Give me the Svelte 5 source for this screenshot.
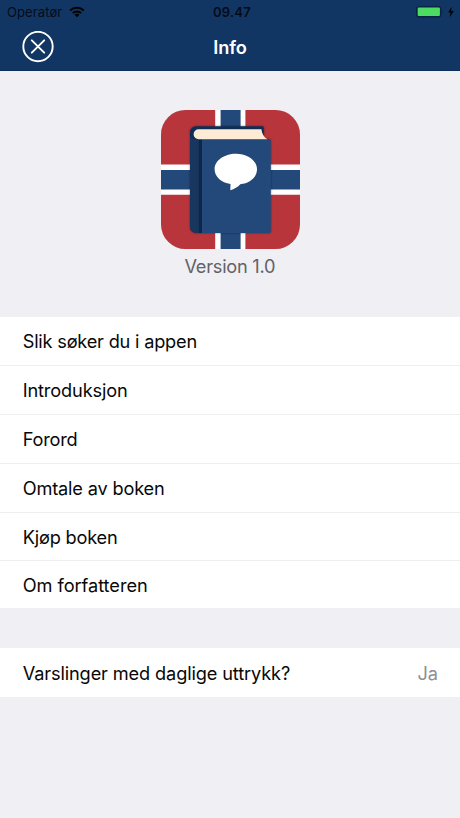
<script lang="ts">
    const items = [
        { label: 'Slik søker du i appen', width: 174.5 },
        { label: 'Introduksjon', width: 105 },
        { label: 'Forord', width: 55 },
        { label: 'Omtale av boken', width: 142 },
        { label: 'Kjøp boken', width: 95 },
        { label: 'Om forfatteren', width: 125 },
    ];
</script>

<div class="screen">
    <header>
        <div class="status">
            <div class="carrier">
                <span>Operatør</span>
                <svg width="16" height="12" viewBox="0 0 16 12">
                    <path d="M1.2 4.5a9.7 9.7 0 0 1 13.6 0M3.8 7.1a6 6 0 0 1 8.4 0" />
                    <path class="solid" d="M8 11.2 5.6 8.8a3.4 3.4 0 0 1 4.8 0z" />
                </svg>
            </div>
            <time>09.47</time>
            <svg class="power" width="39" height="13" viewBox="0 0 39 13">
                <rect class="case" x=".6" y=".5" width="24.4" height="10.6" rx="2.2" />
                <rect class="charge" x="1.7" y="1.6" width="22.2" height="8.4" rx="1" />
                <path class="tip" d="M26.2 4q1.4 1.8 0 3.6z" />
                <path class="solid" d="M35.6 .8 32.2 6.5h2.4l-.8 4.7L37.8 5.1h-2.6z" />
            </svg>
        </div>
        <nav>
            <button aria-label="Lukk">
                <svg width="32" height="32" viewBox="0 0 32 32">
                    <circle cx="16" cy="15.5" r="14.7" />
                    <path d="m9.8 9.3 12.4 12.4M22.2 9.3 9.8 21.7" />
                </svg>
            </button>
            <h1>Info</h1>
        </nav>
    </header>

    <section class="about">
        <svg width="139" height="139" viewBox="0 0 139 139">
            <defs>
                <clipPath id="tile"><rect width="139" height="139" rx="24.5" /></clipPath>
                <filter id="shade" x="-10%" y="-10%" width="120%" height="120%">
                    <feDropShadow dx="0" dy="0" stdDeviation="1.1" flood-opacity=".45" />
                </filter>
            </defs>
            <g clip-path="url(#tile)">
                <rect width="139" height="139" fill="#b8353c" />
                <path fill="#fff" d="M54.2 0h30.2v139H54.2zM0 54.6h139v30.2H0z" />
                <path fill="#23487a" d="M59.6 0h20v139h-20zM0 59.9h139v19.6H0z" />
                <g filter="url(#shade)">
                    <path fill="#112d54" d="M35 16.3h66.4q1.4 0 1.4 1.6v11.4h5.4v93.8H35a6 6 0 0 1-6-6V22.3a6 6 0 0 1 6-6z" />
                    <path fill="#23487a" d="M40.8 29.3h67.4a1.6 1.6 0 0 1 1.6 1.6v90.6a1.6 1.6 0 0 1-1.6 1.6H40.8z" />
                </g>
                <path fill="#19365f" d="M29 25.5q1 3.8 6 3.8h3.6v93.8H35a6 6 0 0 1-6-6z" />
                <path fill="#0e2749" d="M37.8 29.3h3.2v93.8h-3.2z" />
                <path fill="#fdebd6" d="M37.6 19.3h62.8c.4 4.2 2.5 8 6 10H37.6a5 5 0 0 1 0-10z" />
                <path fill="#fff" d="M74.8 43.8c11.8 0 21.2 7 21.2 15.4 0 8-7 14-16.7 15.1-2.3 2.7-6 4.7-10 6l.2-6.3c-9.2-1.5-15.9-7.3-15.9-14.8 0-8.4 9.4-15.4 21.2-15.4z" />
            </g>
        </svg>
        <svg class="version" width="92" height="24"><text x=".5" y="18" textLength="91">Version 1.0</text></svg>
    </section>

    <ul>
        {#each items as item}
            <li>
                <svg width="300" height="26"><text x="-.3" y="20" textLength={item.width}>{item.label}</text></svg>
            </li>
        {/each}
    </ul>

    <div class="setting">
        <svg width="300" height="26"><text x="-.3" y="20" textLength="267.5">Varslinger med daglige uttrykk?</text></svg>
        <span>Ja</span>
    </div>
</div>

<style>
    :global(body) {
        background: #efeff4;
    }

    .screen {
        width: 460px;
        height: 818px;
        overflow: hidden;
        background: #efeff4;
        font-family: Inter, "Liberation Sans", sans-serif;
        color: #080808;
    }

    header {
        box-sizing: border-box;
        height: 71px;
        background: #123663;
        border-bottom: 1px solid #0d2f5a;
    }

    .status {
        display: grid;
        grid-template-columns: 1fr auto 1fr;
        height: 24px;
        padding: 0 5px 0 7px;
        align-items: center;
        font-size: 13px;
        color: #050c18;
    }

    .carrier {
        display: flex;
        gap: 7px;
        align-items: center;
        letter-spacing: .1px;
    }

    .carrier path {
        fill: none;
        stroke: #000;
        stroke-width: 2;
    }

    .carrier path.solid {
        fill: #000;
        stroke: none;
    }

    time {
        padding-left: 2px;
        font-weight: 600;
        letter-spacing: .2px;
    }

    .power {
        justify-self: end;
    }

    .case {
        fill: #0b2747;
        stroke: #092342;
        stroke-width: 1;
    }

    .charge {
        fill: #4cdc64;
    }

    .tip {
        fill: #092342;
    }

    nav {
        display: grid;
        grid-template-columns: 1fr auto 1fr;
        align-items: center;
        height: 46px;
        padding: 0 22px;
    }

    button {
        width: 32px;
        height: 32px;
        padding: 0;
        border: 0;
        background: none;
    }

    button svg {
        display: block;
        fill: none;
        stroke: #fff;
        stroke-width: 1.9;
        stroke-linecap: round;
    }

    h1 {
        margin: 0;
        font-size: 18.2px;
        font-weight: 600;
        letter-spacing: -.1px;
        color: #fff;
    }

    .about {
        display: flex;
        flex-direction: column;
        align-items: center;
        box-sizing: border-box;
        height: 246px;
        padding-top: 39px;
    }

    .about svg {
        display: block;
        flex: none;
    }

    .version {
        margin-top: 6px;
        font-size: 18.2px;
        fill: #626266;
    }

    ul {
        margin: 0;
        padding: 0;
        list-style: none;
        height: 291px;
        overflow: hidden;
        background: #fff;
    }

    li {
        display: flex;
        align-items: center;
        box-sizing: border-box;
        height: 48.9px;
        padding-left: 23px;
        border-bottom: 1px solid #efeff1;
    }

    li:last-child {
        border-bottom-color: #fff;
    }

    li svg,
    .setting svg {
        display: block;
        overflow: visible;
        font-size: 18.2px;
        fill: #080808;
    }

    .setting {
        display: flex;
        justify-content: space-between;
        align-items: center;
        height: 49px;
        margin-top: 40px;
        padding: 0 22px 0 23px;
        background: #fff;
    }

    .setting span {
        font-size: 18.2px;
        color: #8e8e93;
    }
</style>
